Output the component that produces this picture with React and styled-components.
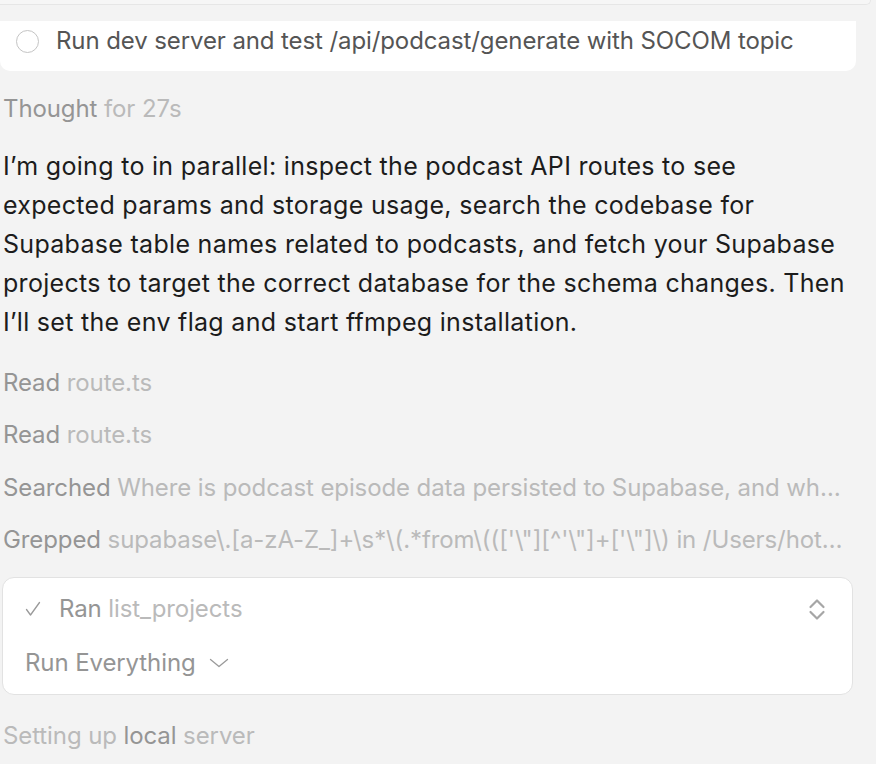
import React from "react";
import styled, { createGlobalStyle } from "styled-components";

const GlobalStyle = createGlobalStyle`
  html, body {
    margin: 0;
    padding: 0;
    background: #f3f3f3;
  }
  body {
    font-family: Inter, "Noto Sans", sans-serif;
    -webkit-font-smoothing: antialiased;
  }
`;

const Page = styled.div`
  width: 876px;
  height: 764px;
  overflow: hidden;
  display: flex;
  flex-direction: column;
`;

const PrevCard = styled.div`
  width: 870px;
  height: 4px;
  border: 1.5px solid #e6e6e6;
  border-top: none;
  border-left: none;
  border-bottom-right-radius: 12px;
  background: #f6f6f6;
`;

const TodoCard = styled.div`
  margin-top: 16px;
  width: 856px;
  height: 50px;
  box-sizing: border-box;
  background: #ffffff;
  border-radius: 0 0 10px 10px;
  display: flex;
  align-items: center;
  gap: 17px;
  padding: 0 0 10px 16px;
`;

const Circle = styled.span`
  width: 21px;
  height: 21px;
  border: 1.5px solid #c4c4c4;
  border-radius: 50%;
  flex-shrink: 0;
`;

const TodoText = styled.span`
  font-size: 24px;
  line-height: 28px;
  letter-spacing: -0.1px;
  color: #555555;
`;

const Content = styled.div`
  padding-left: 3px;
  display: flex;
  flex-direction: column;
`;

const Meta = styled.div`
  font-size: 24px;
  line-height: 28px;
  height: 28px;
  margin-top: ${({ $top }) => $top}px;
  color: #bababa;
  letter-spacing: -0.1px;
  white-space: nowrap;
`;

const Verb = styled.span`
  color: ${({ $dark }) => ($dark ? "#959595" : "inherit")};
`;

const Paragraph = styled.p`
  margin: 24px 0 0;
  width: 852px;
  font-size: 25px;
  line-height: 39px;
  letter-spacing: 0.3px;
  color: #1c1c1c;
`;

const ToolCard = styled.div`
  margin: 23px 0 0 -1px;
  width: 851px;
  height: 118px;
  box-sizing: border-box;
  background: #ffffff;
  border: 1.5px solid #e2e2e2;
  border-radius: 12px;
  padding: 17px 26px 0 22px;
  display: flex;
  flex-direction: column;
  gap: 26px;
`;

const ToolRow = styled.div`
  display: flex;
  align-items: center;
  gap: ${({ $gap }) => $gap || 0}px;
  font-size: 24px;
  line-height: 28px;
  letter-spacing: -0.1px;
  color: #bababa;
`;

const Grow = styled.div`
  flex: 1;
  display: flex;
  align-items: center;
  gap: 18px;
`;

const Icon = styled.svg`
  flex-shrink: 0;
  fill: none;
  stroke: ${({ $tone }) => $tone || "#9a9a9a"};
  stroke-linecap: round;
  stroke-linejoin: round;
`;

const Check = () => (
  <Icon width="16" height="16" viewBox="0 0 16 16" strokeWidth="1.3">
    <path d="M1.5 8.5 L5.5 14 L14.5 1.5" />
  </Icon>
);

const UpDown = () => (
  <Icon width="18" height="23" viewBox="0 0 18 23" strokeWidth="2.2" $tone="#a6a6a6">
    <path d="M2.5 9 L9 2.5 L15.5 9" />
    <path d="M2.5 14 L9 20.5 L15.5 14" />
  </Icon>
);

const ChevronDown = () => (
  <Icon width="20" height="10" viewBox="0 0 20 10" strokeWidth="1.3">
    <path d="M1.5 1.5 L10 8.5 L18.5 1.5" />
  </Icon>
);

const steps = [
  { verb: "Read", detail: "route.ts", top: 27 },
  { verb: "Read", detail: "route.ts", top: 24 },
  {
    verb: "Searched",
    detail: "Where is podcast episode data persisted to Supabase, and wh…",
    top: 25,
  },
  {
    verb: "Grepped",
    detail: String.raw`supabase\.[a-zA-Z_]+\s*\(.*from\((['\"][^'\"]+['\"]\) in /Users/hot…`,
    top: 24,
  },
];

const App = () => {
  return (
    <Page>
      <GlobalStyle />
      <PrevCard />
      <TodoCard>
        <Circle />
        <TodoText>Run dev server and test /api/podcast/generate with SOCOM topic</TodoText>
      </TodoCard>
      <Content>
        <Meta $top={24}>
          <Verb $dark>Thought</Verb> for 27s
        </Meta>
        <Paragraph>
          I’m going to in parallel: inspect the podcast API routes to see expected params and
          storage usage, search the codebase for Supabase table names related to podcasts, and
          fetch your Supabase projects to target the correct database for the schema changes.
          Then I’ll set the env flag and start ffmpeg installation.
        </Paragraph>
        {steps.map((s, i) => (
          <Meta key={i} $top={s.top}>
            <Verb $dark>{s.verb}</Verb> {s.detail}
          </Meta>
        ))}
        <ToolCard>
          <ToolRow>
            <Grow>
              <Check />
              <span>
                <Verb $dark>Ran</Verb> list_projects
              </span>
            </Grow>
            <UpDown />
          </ToolRow>
          <ToolRow $gap={13}>
            <Verb $dark>Run Everything</Verb>
            <ChevronDown />
          </ToolRow>
        </ToolCard>
        <Meta $top={27}>
          Setting up <Verb $dark>local</Verb> server
        </Meta>
      </Content>
    </Page>
  );
};

export default App;
